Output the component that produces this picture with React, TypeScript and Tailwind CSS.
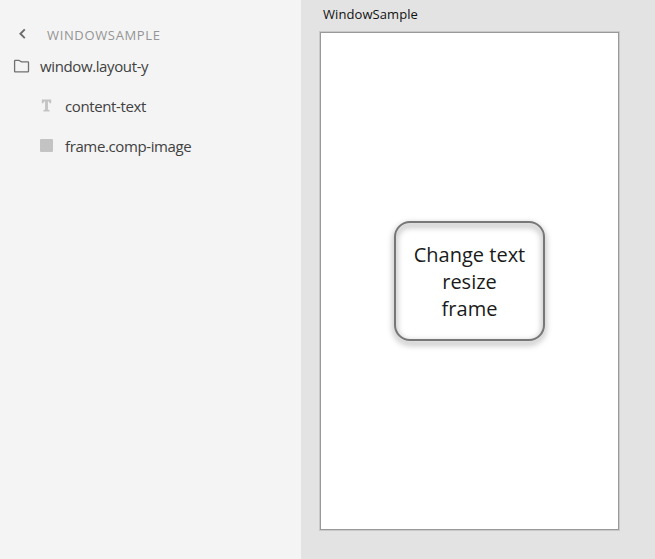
function TreeRow({ icon, label, className }: { icon: React.ReactNode; label: string; className: string }) {
  return (
    <div className={`flex h-10 items-center text-[15px] text-[#414141] ${className}`}>
      {icon}
      <span className="whitespace-nowrap tracking-[-0.38px]">{label}</span>
    </div>
  );
}

export default function App() {
  return (
    <div className="flex h-[559px] w-[655px] overflow-hidden bg-[#e3e3e3] font-['Open_Sans','Noto_Sans',sans-serif]">
      <aside className="w-[301px] shrink-0 bg-[#f4f4f4] pt-6">
        <div className="flex h-[22px] items-center pl-[18px]">
          <svg className="-mt-[3px] mr-[20px] h-3 w-[9px]" viewBox="0 0 9 12" fill="none" stroke="#6b6b6b" strokeWidth="1.9">
            <path d="M6.8 1.4 2.4 5.8l4.4 4.3" />
          </svg>
          <span className="whitespace-nowrap pt-[2px] text-[13px] tracking-[0.65px] text-[#959595]">WINDOWSAMPLE</span>
        </div>
        <TreeRow
          className="pl-[13px]"
          label="window.layout-y"
          icon={
            <svg className="-mt-px mr-[10px] h-4 w-[17px]" viewBox="0 0 17 16" fill="none" stroke="#707070" strokeWidth="1.3">
              <path d="M1.6 13.2V3q0-.7.7-.7h3.5l2.7 1.6h6.3q.7 0 .7.7v8.6q0 .7-.7.7H2.3q-.7 0-.7-.7z" />
            </svg>
          }
        />
        <TreeRow
          className="pl-[40px]"
          label="content-text"
          icon={
            <svg className="-mt-px mr-3 h-[13px] w-[13px]" viewBox="0 0 13 13" fill="#c3c3c3">
              <path d="M1.8.5h9.4v3.8H9.6L9 2.6H7.9v8l1.7.6v1.3H3.4v-1.3l1.7-.6v-8H4l-.6 1.7H1.8z" />
            </svg>
          }
        />
        <TreeRow
          className="pl-[40px]"
          label="frame.comp-image"
          icon={<span className="-mt-[2px] mr-3 h-[13px] w-[13px] rounded-[1px] bg-[#c3c3c3]" />}
        />
      </aside>
      <main className="flex-1 pl-[18px] pt-[4px]">
        <div className="ml-1 h-[27px] whitespace-nowrap text-[13px] leading-5 tracking-[0.08px] text-[#111]">WindowSample</div>
        <div className="h-[500px] w-[301px] border border-[#c9c9c9]">
          <div className="flex h-full items-center justify-center border border-[#999] bg-white">
            <div className="relative h-[120px] w-[151px]">
              <div className="absolute inset-0 rounded-[16px] border-2 border-[#777] drop-shadow-[0_3px_3px_rgba(0,0,0,0.6)]" />
              <div className="relative pt-[19.5px] text-center text-[20px] leading-[27px] text-[#1a1a1a]">
                Change text<br />resize<br />frame
              </div>
            </div>
          </div>
        </div>
      </main>
    </div>
  );
}
